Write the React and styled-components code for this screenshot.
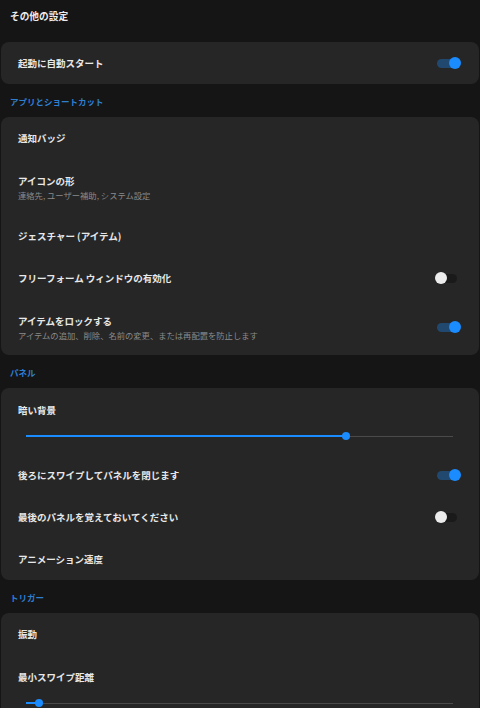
import React from "react";
import styled, { createGlobalStyle } from "styled-components";

const Global = createGlobalStyle`
  html, body { margin: 0; padding: 0; background: #151515; }
  body { font-family: "Noto Sans CJK JP", "Noto Sans", sans-serif; }
  * { box-sizing: border-box; }
`;

const Page = styled.div`
  width: 480px;
  min-height: 708px;
  background: #151515;
  overflow: hidden;
`;

const Title = styled.div`
  height: 42px;
  padding: 10px 10px 0;
  font-size: 9.7px;
  line-height: 12px;
  font-weight: 700;
  color: #ececec;
`;

const SectionHeader = styled.div`
  height: 33px;
  padding-left: 10px;
  display: flex;
  align-items: center;
  font-size: 8.5px;
  font-weight: 700;
  color: #2f7fd1;
`;

const Card = styled.div`
  background: #262626;
  border-radius: 8px;
  margin: 0 1px;
`;

const Row = styled.div`
  height: ${(p) => p.$h || 42}px;
  padding: 0 17px;
  display: flex;
  align-items: center;
  justify-content: space-between;
`;

const TextBlock = styled.div`
  display: flex;
  flex-direction: column;
  gap: 3px;
`;

const Label = styled.div`
  font-size: 9.5px;
  line-height: 12px;
  font-weight: 700;
  color: #e8e8e8;
`;

const Sub = styled.div`
  font-size: 8.3px;
  line-height: 10px;
  color: #8a8a8a;
`;

const SliderRow = styled.div`
  height: 66px;
  padding: 16px 17px 0;
  display: flex;
  flex-direction: column;
`;

const SliderWrap = styled.div`
  position: relative;
  height: 8px;
  margin: 16px 9px 0 8px;
`;

const TrackBase = styled.div`
  position: absolute;
  left: 0;
  right: 0;
  top: 3.5px;
  height: 1px;
  background: #4a4a4a;
`;

const TrackFill = styled.div`
  position: absolute;
  left: 0;
  top: 3px;
  height: 2px;
  background: #1a8cff;
`;

const Thumb = styled.div`
  position: absolute;
  top: 0;
  width: 8px;
  height: 8px;
  margin-left: -4px;
  border-radius: 50%;
  background: #1a8cff;
`;

const ToggleBox = styled.div`
  position: relative;
  width: 26px;
  height: 12px;
  flex-shrink: 0;
  margin-right: 1px;
`;

const ToggleTrack = styled.div`
  position: absolute;
  left: 2px;
  right: 4px;
  top: 1.5px;
  height: 9px;
  border-radius: 5px;
  background: ${(p) => (p.$on ? "#21496f" : "#1a1a1a")};
`;

const ToggleThumb = styled.div`
  position: absolute;
  top: 0;
  left: ${(p) => (p.$on ? "13.5px" : "0px")};
  width: 12px;
  height: 12px;
  border-radius: 50%;
  background: ${(p) => (p.$on ? "#1a8cff" : "#ececec")};
`;

function Toggle({ on }) {
  return (
    <ToggleBox>
      <ToggleTrack $on={on} />
      <ToggleThumb $on={on} />
    </ToggleBox>
  );
}

function Slider({ value }) {
  const pct = `${value * 100}%`;
  return (
    <SliderWrap>
      <TrackBase />
      <TrackFill style={{ width: pct }} />
      <Thumb style={{ left: pct }} />
    </SliderWrap>
  );
}

function Item({ label, sub, toggle }) {
  return (
    <Row $h={sub ? 56 : 42}>
      <TextBlock>
        <Label>{label}</Label>
        {sub && <Sub>{sub}</Sub>}
      </TextBlock>
      {toggle !== undefined && <Toggle on={toggle} />}
    </Row>
  );
}

function SliderItem({ label, value }) {
  return (
    <SliderRow>
      <Label>{label}</Label>
      <Slider value={value} />
    </SliderRow>
  );
}

export default function App() {
  return (
    <Page>
      <Global />
      <Title>その他の設定</Title>
      <Card>
        <Item label="起動に自動スタート" toggle={true} />
      </Card>
      <SectionHeader>アプリとショートカット</SectionHeader>
      <Card>
        <Item label="通知バッジ" />
        <Item label="アイコンの形" sub="連絡先, ユーザー補助, システム設定" />
        <Item label="ジェスチャー (アイテム)" />
        <Item label="フリーフォーム ウィンドウの有効化" toggle={false} />
        <Item
          label="アイテムをロックする"
          sub="アイテムの追加、削除、名前の変更、または再配置を防止します"
          toggle={true}
        />
      </Card>
      <SectionHeader>パネル</SectionHeader>
      <Card>
        <SliderItem label="暗い背景" value={0.75} />
        <Item label="後ろにスワイプしてパネルを閉じます" toggle={true} />
        <Item label="最後のパネルを覚えておいてください" toggle={false} />
        <Item label="アニメーション速度" />
      </Card>
      <SectionHeader>トリガー</SectionHeader>
      <Card>
        <Item label="振動" />
        <SliderItem label="最小スワイプ距離" value={0.03} />
        <Item label="" />
      </Card>
    </Page>
  );
}
